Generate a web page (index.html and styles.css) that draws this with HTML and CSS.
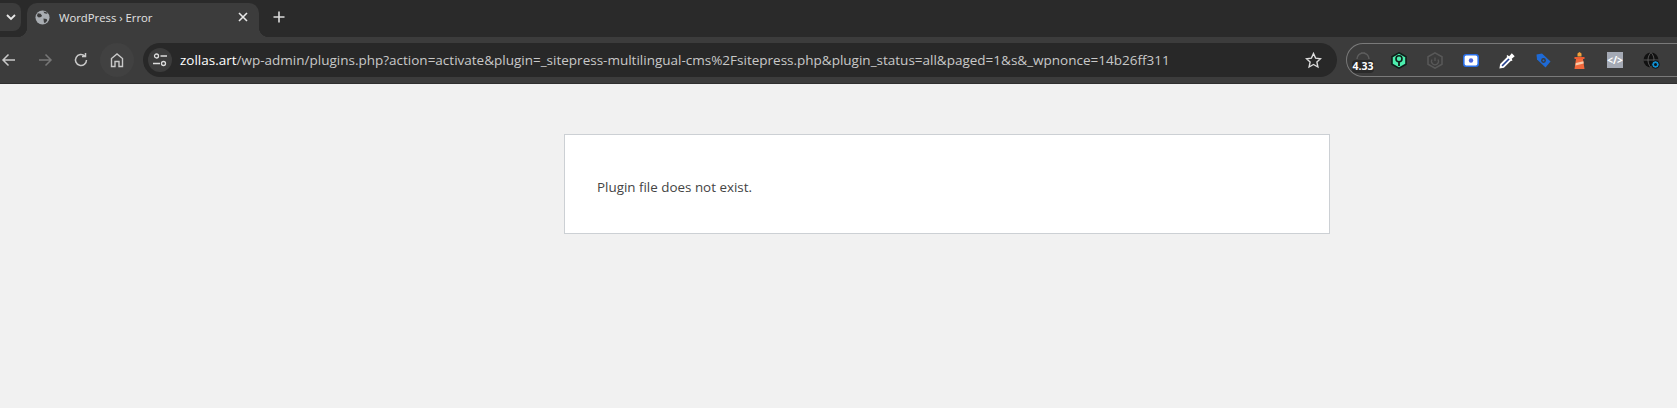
FILE: index.html
```html
<!DOCTYPE html>
<html lang="en">
<head>
  <meta charset="UTF-8" />
  <meta name="viewport" content="width=device-width, initial-scale=1.0" />
  <title>WordPress › Error</title>
  <link rel="stylesheet" href="styles.css">
</head>
<body>
  <div class="tabstrip">
    <div class="tab-search">
      <svg width="12" height="12" viewBox="0 0 12 12"><path d="M2 4l4 4 4-4" fill="none" stroke="#e8e8e8" stroke-width="1.8"/></svg>
    </div>
    <div class="tab">
      <svg class="tab-favicon" width="15" height="15" viewBox="0 0 16 16">
        <circle cx="8" cy="8" r="7.5" fill="#a9adb2"/>
        <path d="M3 3.5l3 .5 1.5 2-1 1.5-2.5.5-2-1.5zM9 1.5l1 2 2.5.5 1.5-1zM9 9l3.5.5.5 2-2.5 2.5-1-1z" fill="#3c3c3c"/>
      </svg>
      <span class="tab-title">WordPress › Error</span>
      <svg class="tab-close" width="10" height="10" viewBox="0 0 10 10"><path d="M1 1l8 8M9 1l-8 8" stroke="#e8e8e8" stroke-width="1.6"/></svg>
    </div>
    <svg class="new-tab" width="12" height="12" viewBox="0 0 12 12"><path d="M6 .5v11M.5 6h11" stroke="#dcdcdc" stroke-width="1.6"/></svg>
  </div>

  <div class="toolbar">
    <div class="nav-buttons">
      <svg class="nav-back" width="16" height="16" viewBox="0 0 16 16"><path d="M14 8H2M7.5 2.5L2 8l5.5 5.5" fill="none" stroke="#c9c9c9" stroke-width="1.5"/></svg>
      <svg class="nav-forward" width="16" height="16" viewBox="0 0 16 16"><path d="M2 8h12M8.5 2.5L14 8l-5.5 5.5" fill="none" stroke="#777" stroke-width="1.5"/></svg>
      <svg class="nav-reload" width="16" height="16" viewBox="0 0 16 16"><path d="M13.5 8a5.5 5.5 0 1 1-1.7-4M12.5 1v3.500H9" fill="none" stroke="#c9c9c9" stroke-width="1.5"/></svg>
      <div class="nav-home">
        <svg width="16" height="16" viewBox="0 0 16 16"><path d="M2.5 14.5V6.5L8 2l5.5 4.500v8H10V9.500H6v5z" fill="none" stroke="#c9c9c9" stroke-width="1.4"/></svg>
      </div>
    </div>

    <div class="omnibox">
      <div class="site-info">
        <svg width="16" height="14" viewBox="0 0 16 14"><circle cx="4.5" cy="3" r="2" fill="none" stroke="#dcdcdc" stroke-width="1.3"/><path d="M8.5 3H15M1 10.5h7" stroke="#dcdcdc" stroke-width="1.3"/><circle cx="11.5" cy="10.5" r="2" fill="none" stroke="#dcdcdc" stroke-width="1.3"/></svg>
      </div>
      <div class="url"><span class="url-host">zollas.art</span>/wp-admin/plugins.php?action=activate&amp;plugin=_sitepress-multilingual-cms%2Fsitepress.php&amp;plugin_status=all&amp;paged=1&amp;s&amp;_wpnonce=14b26ff311</div>
      <svg class="bookmark" width="17" height="17" viewBox="0 0 17 17"><path d="M8.5 1.5l2.1 4.600 5 .6-3.700 3.400 1 4.900-4.400-2.500-4.400 2.500 1-4.900L1.400 6.700l5-.6z" fill="none" stroke="#dcdcdc" stroke-width="1.4"/></svg>
    </div>

    <div class="extensions">
      <div class="ext ext-score">
        <svg class="score-arc" width="14" height="8" viewBox="0 0 14 8"><path d="M1 7a6 6 0 0 1 12 0M5 1h4" fill="none" stroke="#5c5c5c" stroke-width="1.5"/></svg>
        <span class="score-badge">4.33</span>
      </div>
      <div class="ext">
        <svg width="16" height="17" viewBox="0 0 16 17"><path d="M8 .8l7 4v7.400l-7 4-7-4V4.800z" fill="#4cefae" stroke="#0f1f1a" stroke-width="1.6"/><circle cx="8" cy="6.800" r="3" fill="none" stroke="#0f1f1a" stroke-width="1.6"/><path d="M8 9.500v4.500" stroke="#0f1f1a" stroke-width="1.8"/></svg>
      </div>
      <div class="ext">
        <svg width="16" height="17" viewBox="0 0 16 17"><path d="M8 .8l7 4v7.400l-7 4-7-4V4.800z" fill="none" stroke="#585858" stroke-width="1.5"/><path d="M5 7.500a3.500 3.500 0 1 0 6 0M8 9V5.500" fill="none" stroke="#585858" stroke-width="1.3"/></svg>
      </div>
      <div class="ext">
        <svg width="16" height="13" viewBox="0 0 16 13"><rect x=".8" y=".8" width="14.400" height="11.400" rx="2.500" fill="#fff" stroke="#2a6fe8" stroke-width="1.6"/><circle cx="8" cy="6.500" r="2.200" fill="#4a63d8"/></svg>
      </div>
      <div class="ext">
        <svg width="17" height="17" viewBox="0 0 17 17"><path d="M9.500 5L2 12.500 1.500 15.500l3-.5L12 7.500z" fill="#24408f" stroke="#fff" stroke-width="1.8"/><path d="M8.500 3l1.500 1.500L12.800 1.300 15.700 4.200 12.500 7l1 1.500-1 .5-5-5z" fill="#fff"/></svg>
      </div>
      <div class="ext">
        <svg width="15" height="15" viewBox="0 0 15 15"><path d="M.5 1.500L6 .5l8.500 8-5 6L1 6.500z" fill="#1e6ad6"/><circle cx="7.500" cy="7.500" r="2.400" fill="#3c3c3c"/><circle cx="7.500" cy="7.500" r="1" fill="#1e6ad6"/></svg>
      </div>
      <div class="ext">
        <svg width="13" height="17" viewBox="0 0 12 17"><path d="M4 1.500L6 0l2 1.500v3H4z" fill="#f4a13c"/><path d="M1 5h10v2H1z" fill="#ee5c32"/><path d="M2.500 7h7L11 17H1z" fill="#f0683c"/><path d="M2.300 11l7.600-1.800.3 2.300-8.200 2z" fill="#f8c9a8"/></svg>
      </div>
      <div class="ext">
        <div class="ext-code">&lt;/&gt;</div>
      </div>
      <div class="ext">
        <svg width="17" height="17" viewBox="0 0 17 17"><circle cx="8" cy="8" r="7.500" fill="#111"/><path d="M.5 8h15M8 .5c-4 4-4 11 0 15M8 .5c4 4 4 11 0 15" fill="none" stroke="#666" stroke-width=".8"/><circle cx="12.500" cy="12.500" r="3.800" fill="#0f8fd0" stroke="#111"/><circle cx="12.500" cy="12.500" r="1.500" fill="#111"/></svg>
      </div>
    </div>
  </div>

  <main class="page">
    <div class="wp-die-message">
      <p>Plugin file does not exist.</p>
    </div>
  </main>
</body>
</html>
```

FILE: styles.css
```css
html, body {
  margin: 0;
  height: 100%;
  overflow: hidden;
}

body {
  display: flex;
  flex-direction: column;
  background: #f1f1f1;
  font-family: 'Open Sans', 'Noto Sans', sans-serif;
}

/* Tab strip */
.tabstrip {
  display: flex;
  align-items: flex-end;
  height: 37px;
  background: #2a2a2a;
  flex: none;
}

.tab-search {
  display: flex;
  align-items: center;
  justify-content: center;
  width: 21px;
  height: 28px;
  margin-bottom: 6px;
  background: #3c3c3c;
  border-radius: 0 8px 8px 0;
  flex: none;
}

.tab {
  position: relative;
  display: flex;
  align-items: center;
  width: 232px;
  height: 34px;
  margin-left: 6px;
  padding: 0 11px 6px 8px;
  box-sizing: border-box;
  background: #3c3c3c;
  border-radius: 10px 10px 0 0;
  color: #e3e3e3;
  font-size: 11.3px;
  flex: none;
}

/* curved feet of the active tab */
.tab::before,
.tab::after {
  content: "";
  position: absolute;
  bottom: 0;
  width: 10px;
  height: 10px;
}

.tab::before {
  left: -10px;
  background: radial-gradient(circle at 0 0, transparent 10px, #3c3c3c 10.5px);
}

.tab::after {
  right: -10px;
  background: radial-gradient(circle at 100% 0, transparent 10px, #3c3c3c 10.5px);
}

.tab-favicon {
  margin-right: 9px;
}

.tab-title {
  flex: 1;
}

.new-tab {
  margin: 0 0 14px 14px;
}

/* Toolbar */
.toolbar {
  display: flex;
  align-items: center;
  height: 47px;
  background: #3c3c3c;
  border-bottom: 1px solid #2f2f2f;
  box-sizing: border-box;
  flex: none;
}

.nav-buttons {
  display: flex;
  align-items: center;
  width: 143px;
  flex: none;
}

.nav-back {
  margin-left: 1px;
}

.nav-forward {
  margin-left: 20px;
}

.nav-reload {
  margin-left: 20px;
}

.nav-home {
  display: flex;
  align-items: center;
  justify-content: center;
  width: 34px;
  height: 34px;
  margin-left: 11px;
  border-radius: 50%;
  background: #414141;
}

.omnibox {
  display: flex;
  align-items: center;
  width: 1194px;
  height: 34px;
  padding: 0 15px 0 5px;
  box-sizing: border-box;
  background: #282828;
  border-radius: 17px;
  flex: none;
}

.site-info {
  display: flex;
  align-items: center;
  justify-content: center;
  width: 24px;
  height: 24px;
  margin-right: 8px;
  border-radius: 50%;
  background: #3c3c3c;
  flex: none;
}

.url {
  flex: 1;
  color: #c8c8c8;
  font-size: 13.5px;
  white-space: nowrap;
}

.url-host {
  color: #fff;
}

.extensions {
  display: flex;
  align-items: center;
  height: 34px;
  margin-left: 9px;
  flex: 1;
  border: 1px solid #7a7a7a;
  border-right: none;
  border-radius: 17px 0 0 17px;
  box-sizing: border-box;
}

.ext {
  display: flex;
  align-items: center;
  justify-content: center;
  width: 36px;
  height: 20px;
  flex: none;
}

.ext-score {
  position: relative;
  align-items: flex-start;
  width: 32px;
  margin-right: 2px;
}

.score-arc {
  margin-top: 2px;
}

.score-badge {
  position: absolute;
  left: 5px;
  top: 10px;
  width: 22px;
  background: #2a2a2a;
  border-radius: 4px;
  color: #fff;
  font-size: 10.5px;
  font-weight: 700;
  line-height: 13px;
  text-align: center;
}

.ext-code {
  width: 16px;
  height: 16px;
  background: #a4a9b4;
  color: #fff;
  font-size: 10px;
  font-weight: 700;
  line-height: 16px;
  text-align: center;
}

/* Page */
.page {
  flex: 1;
  padding: 50px 0 0 564px;
}

.wp-die-message {
  width: 766px;
  height: 100px;
  padding: 6px 32px 0;
  box-sizing: border-box;
  display: flex;
  align-items: center;
  background: #fff;
  border: 1px solid #ccd0d4;
  color: #444;
  font-size: 13.4px;
}

.wp-die-message p {
  margin: 0;
}
```
